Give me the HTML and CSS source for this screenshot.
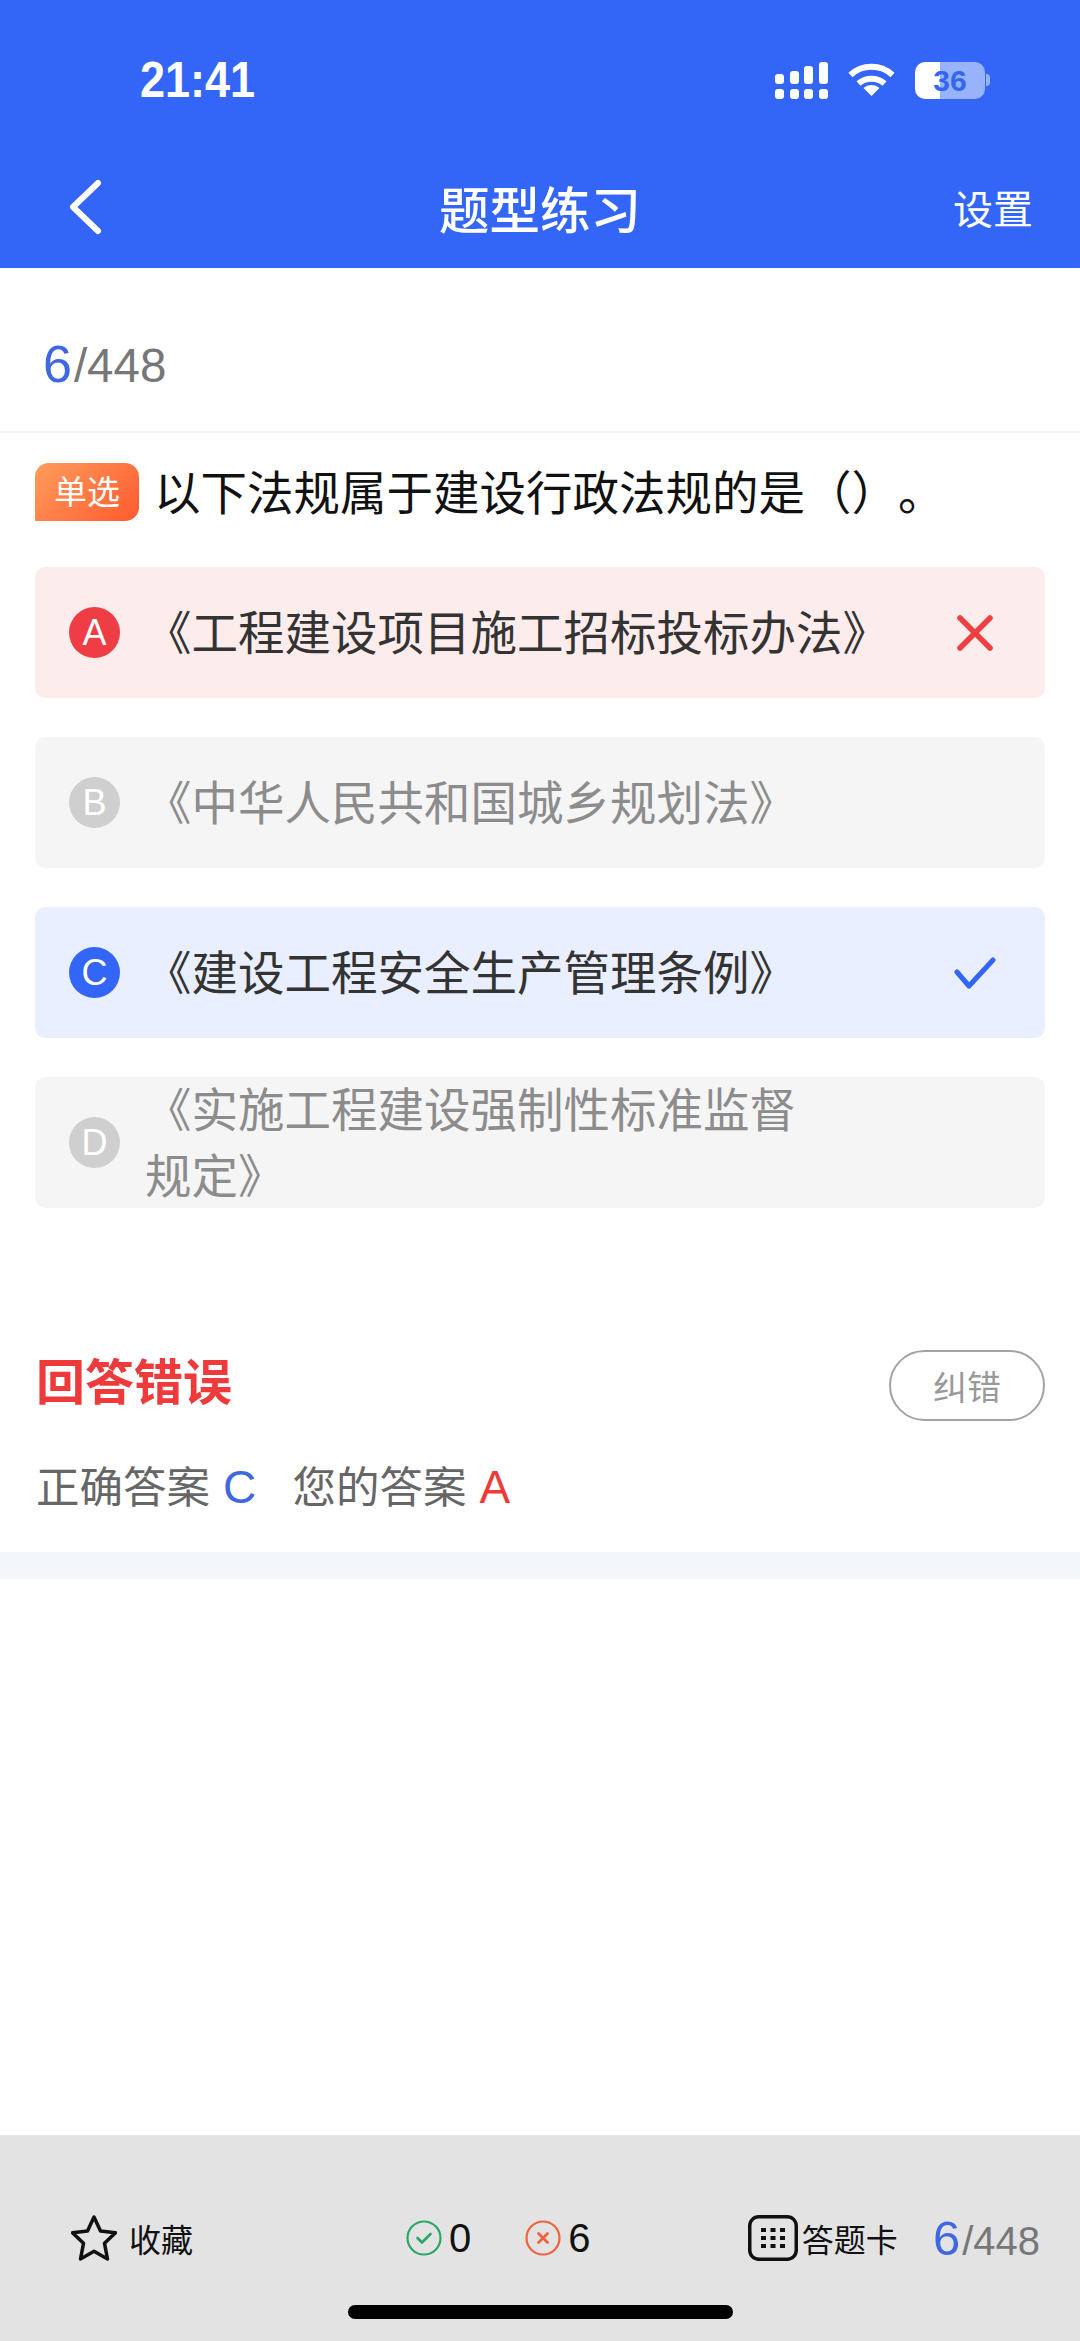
FILE: index.html
```html
<!DOCTYPE html>
<html lang="zh-CN">
<head>
  <meta charset="UTF-8" />
  <meta name="viewport" content="width=device-width, initial-scale=1.0" />
  <title>题型练习</title>
  <link rel="stylesheet" href="styles.css">
</head>
<body>
  <div class="screen">
    <header class="topbar">
      <div class="status">
        <span class="time">21:41</span>
        <div class="status-icons">
          <svg class="signal" width="53" height="37" viewBox="0 0 53 37" fill="#fff">
            <rect x="0" y="12" width="9" height="10" rx="3"/>
            <rect x="15" y="9" width="9" height="13" rx="3"/>
            <rect x="29" y="4" width="9" height="18" rx="3"/>
            <rect x="44" y="0" width="9" height="22" rx="3"/>
            <rect x="0" y="27" width="9" height="10" rx="3"/>
            <rect x="15" y="27" width="9" height="10" rx="3"/>
            <rect x="29" y="27" width="9" height="10" rx="3"/>
            <rect x="44" y="27" width="9" height="10" rx="3"/>
          </svg>
          <svg class="wifi" width="47" height="34" viewBox="0 0 47 34" fill="none" stroke="#fff" stroke-width="6">
            <path d="M2.5 12 C14 1 33 1 44.5 12"/>
            <path d="M10.5 20.5 C17.5 14 29.5 14 36.5 20.5"/>
            <path d="M15.5 25 L23.5 33 L31.5 25 C27 21 20 21 15.5 25 Z" fill="#fff" stroke="none"/>
          </svg>
          <div class="battery">
            <div class="battery-body"><span>36</span></div>
            <div class="battery-nub"></div>
          </div>
        </div>
      </div>
      <nav class="navbar">
        <svg class="back" width="34" height="56" viewBox="0 0 34 56" fill="none" stroke="#fff" stroke-width="6" stroke-linecap="round" stroke-linejoin="round">
          <path d="M30 4 L5 28 L30 52"/>
        </svg>
        <h1 class="nav-title">题型练习</h1>
        <a class="nav-action">设置</a>
      </nav>
    </header>

    <div class="counter">
      <span class="num-current">6</span><span class="num-total">/448</span>
    </div>

    <div class="question">
      <span class="tag">单选</span>
      <p class="question-text">以下法规属于建设行政法规的是（）。</p>
    </div>

    <div class="options">
      <div class="option wrong">
        <span class="letter">A</span>
        <span class="option-text">《工程建设项目施工招标投标办法》</span>
        <svg class="mark" width="36" height="36" viewBox="0 0 36 36" fill="none" stroke="#ee4040" stroke-width="5.5" stroke-linecap="round">
          <path d="M3 3 L33 33 M33 3 L3 33"/>
        </svg>
      </div>
      <div class="option">
        <span class="letter">B</span>
        <span class="option-text">《中华人民共和国城乡规划法》</span>
      </div>
      <div class="option right">
        <span class="letter">C</span>
        <span class="option-text">《建设工程安全生产管理条例》</span>
        <svg class="mark" width="42" height="32" viewBox="0 0 42 32" fill="none" stroke="#3366f6" stroke-width="5" stroke-linecap="round" stroke-linejoin="round">
          <path d="M3 15 L15 29 L39 3"/>
        </svg>
      </div>
      <div class="option">
        <span class="letter">D</span>
        <span class="option-text">《实施工程建设强制性标准监督<br>规定》</span>
      </div>
    </div>

    <div class="result">
      <span class="result-title">回答错误</span>
      <button class="report">纠错</button>
    </div>
    <div class="answers">
      <span>正确答案</span> <span class="blue">C</span>
      <span class="your-answer">您的答案</span> <span class="red">A</span>
    </div>
    <div class="band"></div>

    <footer class="toolbar">
      <div class="toolbar-row">
        <div class="fav">
          <svg width="46" height="46" viewBox="0 0 46 46" fill="none" stroke="#111" stroke-width="3.5" stroke-linejoin="round">
            <path d="M23 2 L29.5 16 L44.5 17.8 L33.5 28.3 L36.5 44 L23 36.3 L9.5 44 L12.5 28.3 L1.5 17.8 L16.5 16 Z"/>
          </svg>
          <span>收藏</span>
        </div>
        <div class="stats">
          <div class="stat">
            <svg width="36" height="36" viewBox="0 0 36 36" fill="none" stroke="#2aa866" stroke-width="2.2">
              <circle cx="18" cy="18" r="16.5"/>
              <path d="M11.5 18 L16 22.5 L24.5 14" stroke-width="2.6" stroke-linecap="round" stroke-linejoin="round"/>
            </svg>
            <span>0</span>
          </div>
          <div class="stat">
            <svg width="36" height="36" viewBox="0 0 36 36" fill="none" stroke="#f0623e" stroke-width="2.2">
              <circle cx="18" cy="18" r="16.5"/>
              <path d="M13.5 13.5 L22.5 22.5 M22.5 13.5 L13.5 22.5" stroke-width="2.8" stroke-linecap="round"/>
            </svg>
            <span>6</span>
          </div>
        </div>
        <div class="sheet">
          <svg width="50" height="46" viewBox="0 0 50 46" fill="#111">
            <rect x="1.75" y="1.75" width="46.5" height="42.5" rx="9" fill="none" stroke="#111" stroke-width="3.5"/>
            <rect x="13" y="13" width="5" height="4"/><rect x="22.5" y="13" width="5" height="4"/><rect x="32" y="13" width="5" height="4"/>
            <rect x="13" y="21" width="5" height="4"/><rect x="22.5" y="21" width="5" height="4"/><rect x="32" y="21" width="5" height="4"/>
            <rect x="13" y="29" width="5" height="4"/><rect x="22.5" y="29" width="5" height="4"/><rect x="32" y="29" width="5" height="4"/>
          </svg>
          <span>答题卡</span>
        </div>
        <div class="page">
          <span class="num-current">6</span><span class="num-total">/448</span>
        </div>
      </div>
      <div class="home-bar"></div>
    </footer>
  </div>
</body>
</html>
```

FILE: styles.css
```css
* {
  margin: 0;
  padding: 0;
  box-sizing: border-box;
}

body {
  font-family: "Liberation Sans", "Noto Sans CJK SC", sans-serif;
  background: #fff;
  color: #111;
}

.screen {
  display: flex;
  flex-direction: column;
  height: 2341px;
  overflow: hidden;
}

/* Top bar */
.topbar {
  background: #3366f6;
  color: #fff;
  height: 268px;
}

.status {
  display: flex;
  justify-content: space-between;
  align-items: center;
  height: 146px;
  padding: 14px 90px 0 140px;
}

.time {
  font-size: 50px;
  font-weight: 700;
  transform: scaleX(0.9);
  transform-origin: left center;
}

.status-icons {
  display: flex;
  align-items: center;
}

.wifi {
  margin-left: 20px;
}

.battery {
  display: flex;
  align-items: center;
  margin-left: 20px;
}

.battery-body {
  width: 70px;
  height: 37px;
  border-radius: 10px;
  background: linear-gradient(90deg, #fff 36%, rgba(255, 255, 255, 0.5) 36%);
  color: #3366f6;
  font-size: 30px;
  font-weight: 700;
  line-height: 37px;
  text-align: center;
}

.battery-nub {
  width: 4px;
  height: 12px;
  margin-left: 1px;
  border-radius: 0 4px 4px 0;
  background: rgba(255, 255, 255, 0.5);
}

.navbar {
  display: flex;
  justify-content: space-between;
  align-items: center;
  position: relative;
  height: 122px;
  padding: 0 47px 0 68px;
}

.nav-title {
  position: absolute;
  left: 0;
  right: 0;
  text-align: center;
  font-size: 50.5px;
  font-weight: 500;
  pointer-events: none;
}

.nav-action {
  font-size: 40px;
}

/* Question counter */
.counter {
  height: 165px;
  padding: 66px 0 0 43px;
  border-bottom: 2px solid #f5f5f5;
  display: flex;
  align-items: baseline;
}

.num-current {
  font-size: 52px;
  color: #3f68e0;
}

.num-total {
  margin-left: 2px;
  font-size: 47.5px;
  color: #777;
}

/* Question stem */
.question {
  display: flex;
  align-items: center;
  padding: 30px 35px 46px;
}

.tag {
  width: 104px;
  height: 58px;
  line-height: 60px;
  text-align: center;
  font-size: 33px;
  color: #fff;
  border-radius: 14px 14px 14px 0;
  background: linear-gradient(135deg, #ff9c5c, #ff5a2e);
}

.question-text {
  margin-left: 15px;
  padding-top: 4px;
  font-size: 46.5px;
  line-height: 54px;
  color: #111;
  text-spacing-trim: space-all;
}

/* Options */
.options {
  display: flex;
  flex-direction: column;
  gap: 39px;
  padding: 0 35px;
}

.option {
  display: flex;
  align-items: center;
  height: 131px;
  padding: 0 34px;
  border-radius: 10px;
  background: #f5f5f5;
  color: #8c8c8c;
}

.letter {
  flex-shrink: 0;
  width: 51px;
  height: 51px;
  line-height: 51px;
  text-align: center;
  border-radius: 50%;
  font-size: 36px;
  color: #fff;
  background: #cfcfcf;
}

.option-text {
  flex: 1;
  margin-left: 25px;
  padding-top: 2px;
  font-size: 46.5px;
  line-height: 66px;
}

.wrong {
  background: #fdecec;
  color: #333;
}

.wrong .letter {
  background: #ee3d45;
}

.wrong .mark {
  margin-right: 18px;
}

.right {
  background: #e9effe;
  color: #333;
}

.right .letter {
  background: #3366f6;
}

.right .mark {
  margin-right: 15px;
}

/* Result */
.result {
  display: flex;
  justify-content: space-between;
  align-items: center;
  margin-top: 142px;
  padding: 0 35px 0 36px;
}

.result-title {
  padding-bottom: 6px;
  font-size: 49px;
  line-height: 60px;
  font-weight: 700;
  color: #ee3a3a;
}

.report {
  width: 156px;
  height: 71px;
  border: 2px solid #a3a3a3;
  border-radius: 36px;
  background: #fff;
  color: #999;
  font-family: inherit;
  font-size: 34px;
}

.answers {
  margin: 37px 0 34px;
  padding-left: 36px;
  height: 60px;
  font-size: 43.5px;
  line-height: 60px;
  color: #666;
}

.your-answer {
  margin-left: 24px;
}

.blue {
  margin-left: 1px;
  font-size: 46px;
  line-height: 1;
  color: #3f68e0;
}

.red {
  margin-left: 1px;
  font-size: 46px;
  line-height: 1;
  color: #ee3a3a;
}

.band {
  height: 27px;
  background: #f4f7fa;
}

/* Bottom toolbar */
.toolbar {
  margin-top: auto;
  height: 206px;
  padding-top: 80px;
  background: #e3e3e3;
}

.toolbar-row {
  display: flex;
  align-items: center;
  height: 46px;
  padding: 0 40px 0 71px;
  font-size: 32px;
}

.fav,
.sheet,
.stat,
.stats {
  display: flex;
  align-items: center;
}

.fav {
  gap: 12px;
}

.stats {
  gap: 54px;
  margin-left: 213px;
}

.stat {
  gap: 7px;
  font-size: 40px;
}

.sheet {
  gap: 4px;
  margin-left: auto;
}

.page {
  margin-left: 35px;
}

.page .num-current {
  font-size: 49px;
}

.page .num-total {
  font-size: 40px;
}

.home-bar {
  width: 385px;
  height: 14px;
  margin: 44px auto 0;
  border-radius: 7px;
  background: #000;
}
```
